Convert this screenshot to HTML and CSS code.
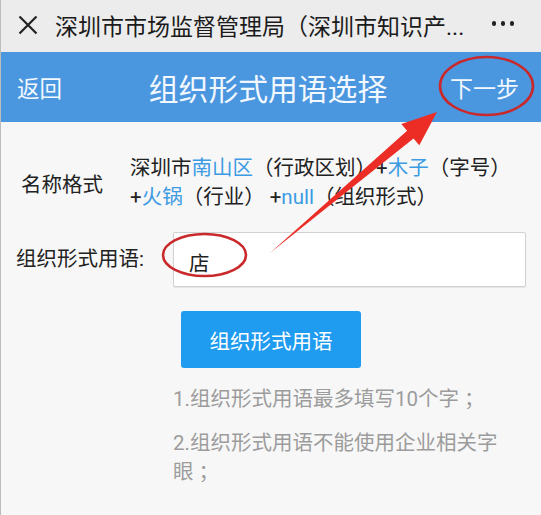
FILE: index.html
```html
<!DOCTYPE html>
<html lang="zh-CN">
<head>
<meta charset="utf-8">
<title>组织形式用语选择</title>
<link rel="stylesheet" href="styles.css">
</head>
<body>
<div class="page">
  <div class="topbar">
    <svg class="close" width="20" height="20" viewBox="0 0 20 20"><path d="M1.5 1.5 L18.5 18.5 M18.5 1.5 L1.5 18.5" stroke="#222" stroke-width="2.2" fill="none"/></svg>
    <div class="topbar-title">深圳市市场监督管理局（深圳市知识产...</div>
    <div class="more"><span></span><span></span><span></span></div>
  </div>
  <div class="header">
    <span class="back">返回</span>
    <span class="header-title">组织形式用语选择</span>
    <span class="next">下一步</span>
  </div>
  <div class="content">
    <div class="format-row">
      <div class="format-label">名称格式</div>
      <div class="format-value">深圳市<span class="hl">南山区</span>（行政区划）+<span class="hl">木子</span>（字号）<br>+<span class="hl">火锅</span>（行业） +<span class="hl">null</span>（组织形式）</div>
    </div>
    <div class="input-row">
      <div class="input-label">组织形式用语:</div>
      <div class="input-box">店</div>
    </div>
    <div class="action"><button class="btn">组织形式用语</button></div>
    <div class="notes">
      <p>1.组织形式用语最多填写10个字&nbsp;；</p>
      <p>2.组织形式用语不能使用企业相关字眼&nbsp;；</p>
    </div>
  </div>
  <svg class="annotations" width="541" height="515" viewBox="0 0 541 515">
    <ellipse cx="486.5" cy="86" rx="46.5" ry="29" fill="none" stroke="#c9292b" stroke-width="2.6"/>
    <ellipse cx="204.5" cy="255" rx="41.5" ry="21" fill="none" stroke="#c9292b" stroke-width="2.6"/>
    <polygon points="270,253 407.1,130.8 401.3,123.9 437,112 419.3,145.3 413.5,138.4" fill="#ec2d26"/>
  </svg>
</div>
</body>
</html>
```
FILE: styles.css
```css
html, body {
  margin: 0;
  padding: 0;
}
body {
  font-family: Roboto, "Noto Sans CJK SC", sans-serif;
  background: #f7f7f7;
}
.page {
  position: relative;
  width: 540px;
  height: 515px;
  border-left: 1px solid #bdbdbd;
  background: #f7f7f7;
  overflow: hidden;
}
.topbar {
  height: 52px;
  background: #ececec;
  display: flex;
  align-items: center;
  padding-left: 17px;
}
.close {
  flex: 0 0 auto;
  margin-top: -3px;
}
.topbar-title {
  margin-left: 17px;
  font-size: 23px;
  color: #1b1b1b;
  white-space: nowrap;
  margin-top: -3px;
}
.more {
  margin-left: auto;
  margin-right: 27px;
  display: flex;
  gap: 4.5px;
  margin-top: -5px;
}
.more span {
  width: 4.5px;
  height: 4.5px;
  border-radius: 50%;
  background: #222;
}
.header {
  height: 70px;
  background: #4a97e0;
  display: grid;
  grid-template-columns: 1fr auto 1fr;
  align-items: center;
  padding: 0 22px 0 16px;
  color: #f3f8fe;
}
.back {
  justify-self: start;
  font-size: 22.5px;
}
.header-title {
  font-size: 29.8px;
}
.next {
  justify-self: end;
  font-size: 23px;
}
.content {
  padding: 32px 15px 0 15px;
  font-size: 20.5px;
}
.format-row {
  display: flex;
  align-items: center;
}
.format-label {
  flex: 0 0 114px;
  box-sizing: border-box;
  padding-left: 5px;
  color: #222;
}
.format-value {
  line-height: 29px;
  color: #222;
}
.hl {
  color: #3d9be3;
}
.input-row {
  display: flex;
  align-items: center;
  margin-top: 20px;
}
.input-label {
  flex: 0 0 157px;
  color: #222;
  padding-bottom: 5px;
}
.input-box {
  flex: 1;
  height: 55px;
  box-sizing: border-box;
  background: #fff;
  border: 1px solid #d2d2d2;
  border-radius: 2px;
  box-shadow: 0 1px 1px rgba(0,0,0,0.08);
  padding-left: 15px;
  display: flex;
  align-items: center;
  padding-top: 4px;
  color: #222;
}
.action {
  margin-top: 24px;
  padding-left: 165px;
}
.btn {
  width: 180px;
  height: 57px;
  border: none;
  border-radius: 3px;
  background: #1f9bf0;
  color: #fff;
  font-family: inherit;
  font-size: 20.5px;
  padding: 0;
}
.notes {
  margin: 17px 0 0 157px;
  width: 334px;
  color: #9c9c9c;
  line-height: 29px;
}
.notes p {
  margin: 0;
}
.notes p + p {
  margin-top: 15px;
}
.annotations {
  position: absolute;
  left: -1px;
  top: 0;
  pointer-events: none;
}
```
